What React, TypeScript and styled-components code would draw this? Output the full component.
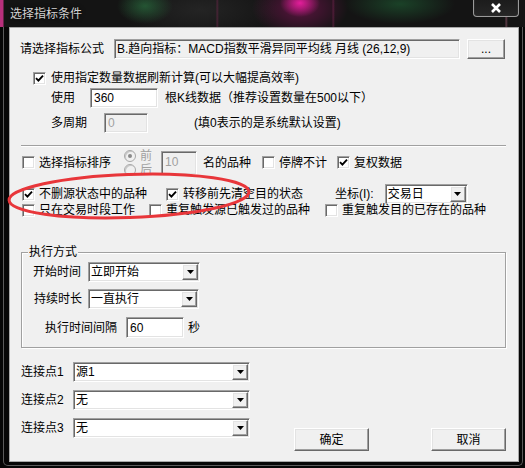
import React from "react";
import styled, { createGlobalStyle, css } from "styled-components";

const GlobalStyle = createGlobalStyle`
  html, body { margin: 0; padding: 0; background: #000; }
  body {
    font-family: "Liberation Sans", "Noto Sans CJK SC", sans-serif;
    font-size: 12px;
    line-height: 14px;
    color: #000;
  }
  * { box-sizing: border-box; }
`;

const sunken = css`
  border: 1px solid;
  border-color: #a0a0a0 #ffffff #ffffff #a0a0a0;
  box-shadow: inset 1px 1px 0 #696969, inset -1px -1px 0 #e3e3e3;
`;

const raised = css`
  border: 1px solid;
  border-color: #ffffff #696969 #696969 #ffffff;
  box-shadow: inset -1px -1px 0 #a0a0a0, inset 1px 1px 0 #e3e3e3;
  background: #f0f0f0;
`;

const Window = styled.div`
  width: 525px;
  height: 468px;
  display: flex;
  flex-direction: column;
  background: #060606;
  overflow: hidden;
`;

const TitleBar = styled.div`
  height: 27px;
  flex: none;
  display: flex;
  align-items: flex-start;
  justify-content: space-between;
  background:
    linear-gradient(90deg, #b8307c 0, #b8307c 3px, transparent 4px),
    radial-gradient(ellipse 20px 14px at 300px 3px, rgba(235, 30, 160, 0.95), transparent),
    radial-gradient(ellipse 48px 30px at 300px 8px, rgba(150, 20, 100, 0.55), transparent),
    linear-gradient(90deg, transparent 216px, rgba(120, 40, 80, 0.5) 217px, transparent 219px),
    linear-gradient(90deg, transparent 332px, rgba(120, 40, 80, 0.5) 333px, transparent 335px),
    linear-gradient(90deg, transparent 505px, rgba(150, 90, 110, 0.6) 506px, transparent 508px),
    radial-gradient(ellipse 28px 18px at 145px 6px, rgba(40, 105, 60, 0.75), transparent),
    radial-gradient(ellipse 55px 20px at 400px 4px, rgba(30, 90, 50, 0.65), transparent),
    radial-gradient(ellipse 80px 30px at 200px 10px, rgba(40, 40, 40, 0.8), transparent),
    #141414;
`;

const TitleText = styled.div`
  margin: 7px 0 0 10px;
  color: #d2d2d2;
  text-shadow: 0 0 4px rgba(0, 0, 0, 0.9);
  line-height: 14px;
`;

const CloseButton = styled.div`
  width: 46px;
  height: 17px;
  margin-right: 6px;
  border: 1px solid #9a9a9a;
  border-top: none;
  border-radius: 0 0 4px 4px;
  box-shadow: inset 0 -1px 0 #2a2a2a, inset 1px 0 0 #2a2a2a, inset -1px 0 0 #2a2a2a;
  background: linear-gradient(#1c1c1c, #262626);
  display: flex;
  align-items: center;
  justify-content: center;
`;

const Frame = styled.div`
  flex: 1;
  display: flex;
  margin: 0 2px 2px 3px;
  border: 1px solid #5a5a5a;
  border-top: none;
  border-radius: 0 0 5px 5px;
  padding: 0 3px 3px 5px;
`;

const Client = styled.div`
  flex: 1;
  position: relative;
  display: flex;
  flex-direction: column;
  background: #f0f0f0;
  border: 1px solid #a8a8a8;
  padding: 11px 12px 0 10px;
`;

const Row = styled.div<{ $h: number; $mt?: number; $ml?: number }>`
  flex: none;
  display: flex;
  align-items: center;
  height: ${(p) => p.$h}px;
  margin-top: ${(p) => p.$mt ?? 0}px;
  margin-left: ${(p) => p.$ml ?? 0}px;
  white-space: nowrap;
`;

const Text = styled.span<{ $ml?: number; $w?: number; $gray?: boolean }>`
  flex: none;
  margin-left: ${(p) => p.$ml ?? 0}px;
  ${(p) => (p.$w ? `width: ${p.$w}px;` : "")}
  color: ${(p) => (p.$gray ? "#a0a0a0" : "#000")};
  white-space: nowrap;
`;

const ReadOnlyField = styled.div<{ $w: number }>`
  ${sunken};
  flex: none;
  width: ${(p) => p.$w}px;
  height: 20px;
  margin-left: 10px;
  background: #f0f0f0;
  display: flex;
  align-items: center;
  padding-left: 2px;
  overflow: hidden;
  white-space: nowrap;
`;

const Button = styled.div<{ $w: number; $h: number; $ml?: number }>`
  ${raised};
  flex: none;
  width: ${(p) => p.$w}px;
  height: ${(p) => p.$h}px;
  margin-left: ${(p) => p.$ml ?? 0}px;
  display: flex;
  align-items: center;
  justify-content: center;
`;

const Edit = styled.div<{ $w: number; $h: number; $ml?: number; $disabled?: boolean; $top?: boolean }>`
  ${sunken};
  flex: none;
  width: ${(p) => p.$w}px;
  height: ${(p) => p.$h}px;
  margin-left: ${(p) => p.$ml ?? 0}px;
  background: ${(p) => (p.$disabled ? "#f0f0f0" : "#ffffff")};
  color: ${(p) => (p.$disabled ? "#a0a0a0" : "#000")};
  display: flex;
  align-items: ${(p) => (p.$top ? "flex-start" : "center")};
  padding: ${(p) => (p.$top ? "3px 3px 0" : "0 3px")};
`;

const CheckItem = styled.label<{ $ml?: number; $gap?: number }>`
  flex: none;
  display: inline-flex;
  align-items: center;
  gap: ${(p) => p.$gap ?? 4}px;
  margin-left: ${(p) => p.$ml ?? 0}px;
`;

const CheckBox = styled.span`
  ${sunken};
  flex: none;
  width: 13px;
  height: 13px;
  background: #fff;
  display: flex;
  align-items: center;
  justify-content: center;
`;

const RadioGroup = styled.div<{ $ml?: number }>`
  flex: none;
  height: 27px;
  margin-left: ${(p) => p.$ml ?? 0}px;
  display: flex;
  flex-direction: column;
  justify-content: space-between;
  overflow: hidden;
  color: #a0a0a0;
`;

const RadioItem = styled.div`
  display: flex;
  align-items: center;
  gap: 4px;
  height: 13px;
`;

const RadioCircle = styled.span<{ $on?: boolean }>`
  flex: none;
  width: 12px;
  height: 12px;
  border-radius: 50%;
  border: 1px solid #a8a8a8;
  background: #f0f0f0;
  box-shadow: inset 1px 1px 0 #c8c8c8;
  display: flex;
  align-items: center;
  justify-content: center;
  &::after {
    content: "";
    display: ${(p) => (p.$on ? "block" : "none")};
    width: 4px;
    height: 4px;
    border-radius: 50%;
    background: #8a8a8a;
  }
`;

const Separator = styled.div`
  flex: none;
  height: 2px;
  margin-top: 12px;
  margin-left: 1px;
  border-top: 1px solid #a0a0a0;
  border-bottom: 1px solid #ffffff;
`;

const Combo = styled.div<{ $w: number; $ml?: number }>`
  ${sunken};
  flex: none;
  width: ${(p) => p.$w}px;
  height: 20px;
  margin-left: ${(p) => p.$ml ?? 0}px;
  background: #fff;
  display: flex;
  align-items: center;
  padding: 0 1px 0 2px;
`;

const ComboText = styled.span`
  flex: 1;
  white-space: nowrap;
`;

const ComboArrow = styled.span`
  ${raised};
  flex: none;
  width: 16px;
  height: 16px;
  display: flex;
  align-items: center;
  justify-content: center;
`;

const Group = styled.div`
  flex: none;
  margin-top: 36px;
  margin-left: 1px;
  border: 1px solid #a0a0a0;
  box-shadow: inset 1px 1px 0 #ffffff, 1px 1px 0 #ffffff;
  padding: 0 0 9px 11px;
  display: flex;
  flex-direction: column;
`;

const Legend = styled.div`
  flex: none;
  align-self: flex-start;
  margin: -8px 0 0 -5px;
  padding: 0 1px;
  background: #f0f0f0;
  line-height: 14px;
`;

const BottomSection = styled.div`
  flex: none;
  display: flex;
  align-items: flex-start;
  margin-top: 14px;
`;

const LinkColumn = styled.div`
  display: flex;
  flex-direction: column;
  gap: 8px;
  margin-left: 1px;
`;

const ButtonBar = styled.div`
  margin-left: auto;
  margin-top: 66px;
  display: flex;
  gap: 62px;
`;

const Ellipse = styled.svg`
  position: absolute;
  left: -4px;
  top: 138px;
  width: 250px;
  height: 60px;
  overflow: visible;
  pointer-events: none;
`;

const Check = () => (
  <svg width="9" height="9" viewBox="0 0 9 9">
    <path d="M1 4.2 L3.4 6.6 L8 1.6" stroke="#000" strokeWidth="1.9" fill="none" />
  </svg>
);

const Arrow = () => (
  <svg width="7" height="4" viewBox="0 0 7 4">
    <path d="M0 0 H7 L3.5 4 Z" fill="#000" />
  </svg>
);

const CheckField = ({
  label,
  checked,
  ml,
  gap,
}: {
  label: string;
  checked?: boolean;
  ml?: number;
  gap?: number;
}) => (
  <CheckItem $ml={ml} $gap={gap}>
    <CheckBox>{checked ? <Check /> : null}</CheckBox>
    <span>{label}</span>
  </CheckItem>
);

const ComboBox = ({ value, w, ml }: { value: string; w: number; ml?: number }) => (
  <Combo $w={w} $ml={ml}>
    <ComboText>{value}</ComboText>
    <ComboArrow>
      <Arrow />
    </ComboArrow>
  </Combo>
);

export default function App() {
  return (
    <>
      <GlobalStyle />
      <Window>
        <TitleBar>
          <TitleText>选择指标条件</TitleText>
          <CloseButton>
            <svg width="12" height="10" viewBox="0 0 12 10">
              <path d="M2 1 L10 9 M10 1 L2 9" stroke="#ffffff" strokeWidth="2.6" />
            </svg>
          </CloseButton>
        </TitleBar>
        <Frame>
          <Client>
            <Row $h={20}>
              <Text $w={84}>请选择指标公式</Text>
              <ReadOnlyField $w={346}>B.趋向指标：MACD指数平滑异同平均线 月线 (26,12,9)</ReadOnlyField>
              <Button $w={38} $h={20} $ml={7}>...</Button>
            </Row>

            <Row $h={14} $mt={12}>
              <CheckField ml={13} gap={5} checked label="使用指定数量数据刷新计算(可以大幅提高效率)" />
            </Row>

            <Row $h={20} $mt={3}>
              <Text $ml={31}>使用</Text>
              <Edit $w={68} $h={20} $ml={15}>360</Edit>
              <Text $ml={7}>根K线数据（推荐设置数量在500以下）</Text>
            </Row>

            <Row $h={20} $mt={5}>
              <Text $ml={31}>多周期</Text>
              <Edit $w={44} $h={20} $ml={17} $disabled>0</Edit>
              <Text $ml={46}>(填0表示的是系统默认设置)</Text>
            </Row>

            <Separator />

            <Row $h={27} $mt={2}>
              <CheckField ml={2} label="选择指标排序" />
              <RadioGroup $ml={13}>
                <RadioItem>
                  <RadioCircle $on />
                  <span>前</span>
                </RadioItem>
                <RadioItem>
                  <RadioCircle />
                  <span>后</span>
                </RadioItem>
              </RadioGroup>
              <Edit $w={36} $h={24} $ml={9} $disabled $top>10</Edit>
              <Text $ml={6}>名的品种</Text>
              <CheckField ml={11} label="停牌不计" />
              <CheckField ml={10} checked label="复权数据" />
            </Row>

            <Row $h={20} $mt={8}>
              <CheckField ml={2} checked label="不删源状态中的品种" />
              <CheckField ml={19} checked label="转移前先清空目的状态" />
              <Text $ml={32}>坐标(I):</Text>
              <ComboBox value="交易日" w={83} ml={11} />
            </Row>

            <Row $h={12}>
              <CheckField ml={2} label="只在交易时段工作" />
              <CheckField ml={14} label="重复触发源已触发过的品种" />
              <CheckField ml={15} label="重复触发目的已存在的品种" />
            </Row>

            <Group>
              <Legend>执行方式</Legend>
              <Row $h={20} $mt={3}>
                <Text>开始时间</Text>
                <ComboBox value="立即开始" w={112} ml={7} />
              </Row>
              <Row $h={20} $mt={7}>
                <Text $ml={1}>持续时长</Text>
                <ComboBox value="一直执行" w={111} ml={6} />
              </Row>
              <Row $h={21} $mt={8}>
                <Text $ml={12}>执行时间间隔</Text>
                <Edit $w={58} $h={21} $ml={9}>60</Edit>
                <Text $ml={4}>秒</Text>
              </Row>
            </Group>

            <BottomSection>
              <LinkColumn>
                <Row $h={20}>
                  <Text $w={52}>连接点1</Text>
                  <ComboBox value="源1" w={177} />
                </Row>
                <Row $h={20}>
                  <Text $w={52}>连接点2</Text>
                  <ComboBox value="无" w={177} />
                </Row>
                <Row $h={20}>
                  <Text $w={52}>连接点3</Text>
                  <ComboBox value="无" w={177} />
                </Row>
              </LinkColumn>
              <ButtonBar>
                <Button $w={75} $h={23}>确定</Button>
                <Button $w={75} $h={23}>取消</Button>
              </ButtonBar>
            </BottomSection>

            <Ellipse viewBox="0 0 250 60">
              <ellipse
                cx="123"
                cy="30"
                rx="120"
                ry="21.5"
                transform="rotate(-2 123 30)"
                fill="none"
                stroke="#e8363a"
                strokeWidth="3"
              />
            </Ellipse>
          </Client>
        </Frame>
      </Window>
    </>
  );
}
